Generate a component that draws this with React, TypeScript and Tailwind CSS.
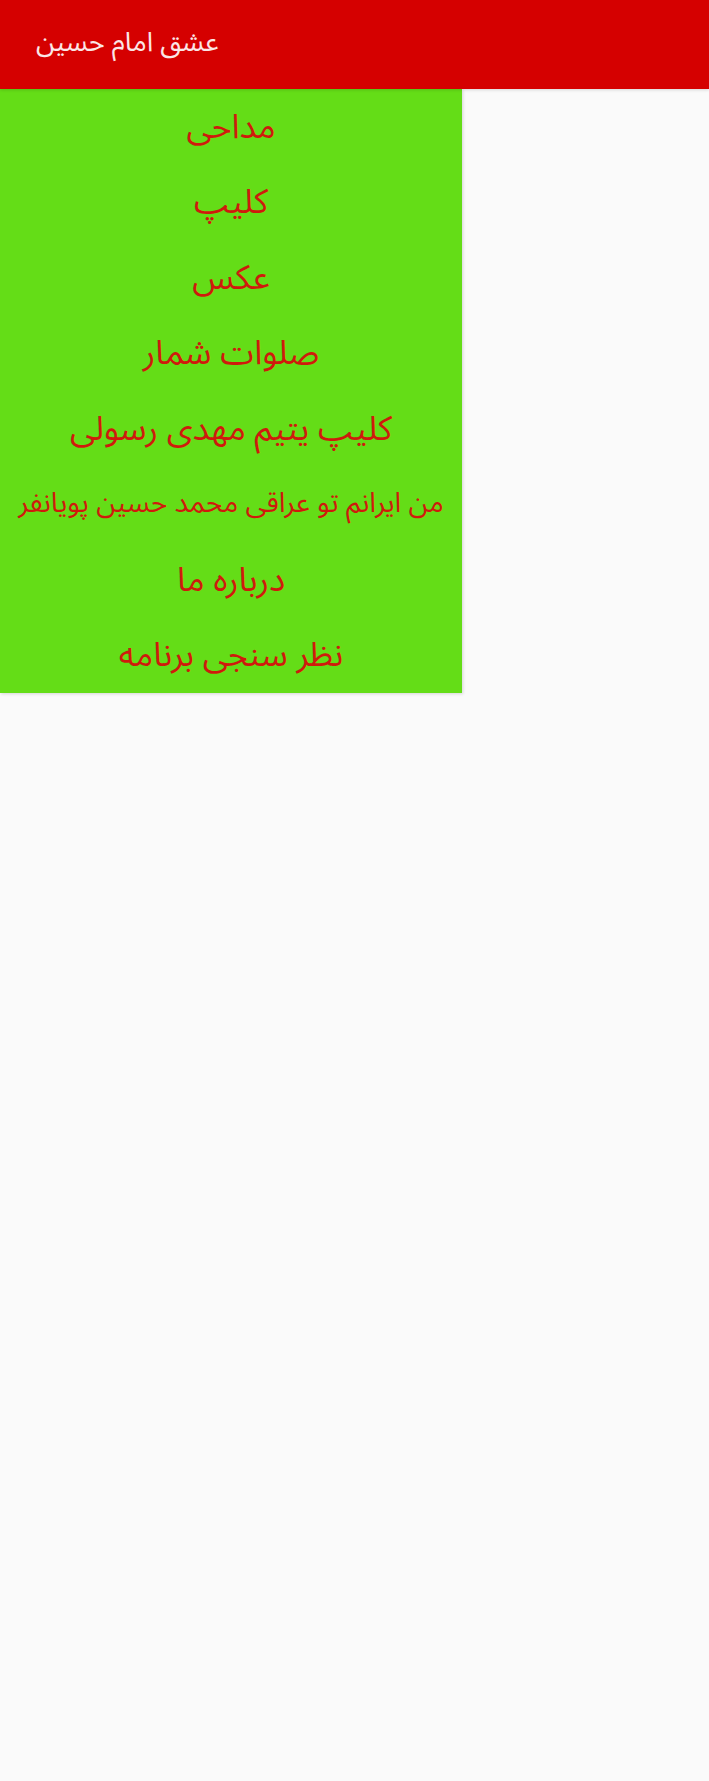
const ITEMS: { label: string; small?: boolean }[] = [
  { label: 'مداحی' },
  { label: 'کلیپ' },
  { label: 'عکس' },
  { label: 'صلوات شمار' },
  { label: 'کلیپ یتیم مهدی رسولی' },
  { label: 'من ایرانم تو عراقی محمد حسین پویانفر', small: true },
  { label: 'درباره ما' },
  { label: 'نظر سنجی برنامه' },
]

export default function App() {
  return (
    <div className="min-h-[1781px] bg-[#fafafa] font-['Noto_Sans_Arabic','DejaVu_Sans',sans-serif]">
      {/* Toolbar */}
      <div className="h-[89px] bg-[#d50000] flex items-center px-[36px] shadow-[0_1px_3px_rgba(0,0,0,0.15)] relative z-10">
        <h1 dir="rtl" className="text-[27px] text-[#fbe6e6] leading-none -mt-[4px]">عشق امام حسین</h1>
      </div>

      {/* Menu */}
      <div className="w-[462px] bg-[#64dd17] shadow-[1px_1px_3px_rgba(0,0,0,0.15)]">
        {ITEMS.map((item) => (
          <div
            key={item.label}
            dir="rtl"
            className={`h-[75.5px] flex items-center justify-center text-[#cf1a0c] leading-none whitespace-nowrap ${
              item.small ? 'text-[28px]' : 'text-[34px]'
            }`}
          >
            {item.label}
          </div>
        ))}
      </div>
    </div>
  )
}
